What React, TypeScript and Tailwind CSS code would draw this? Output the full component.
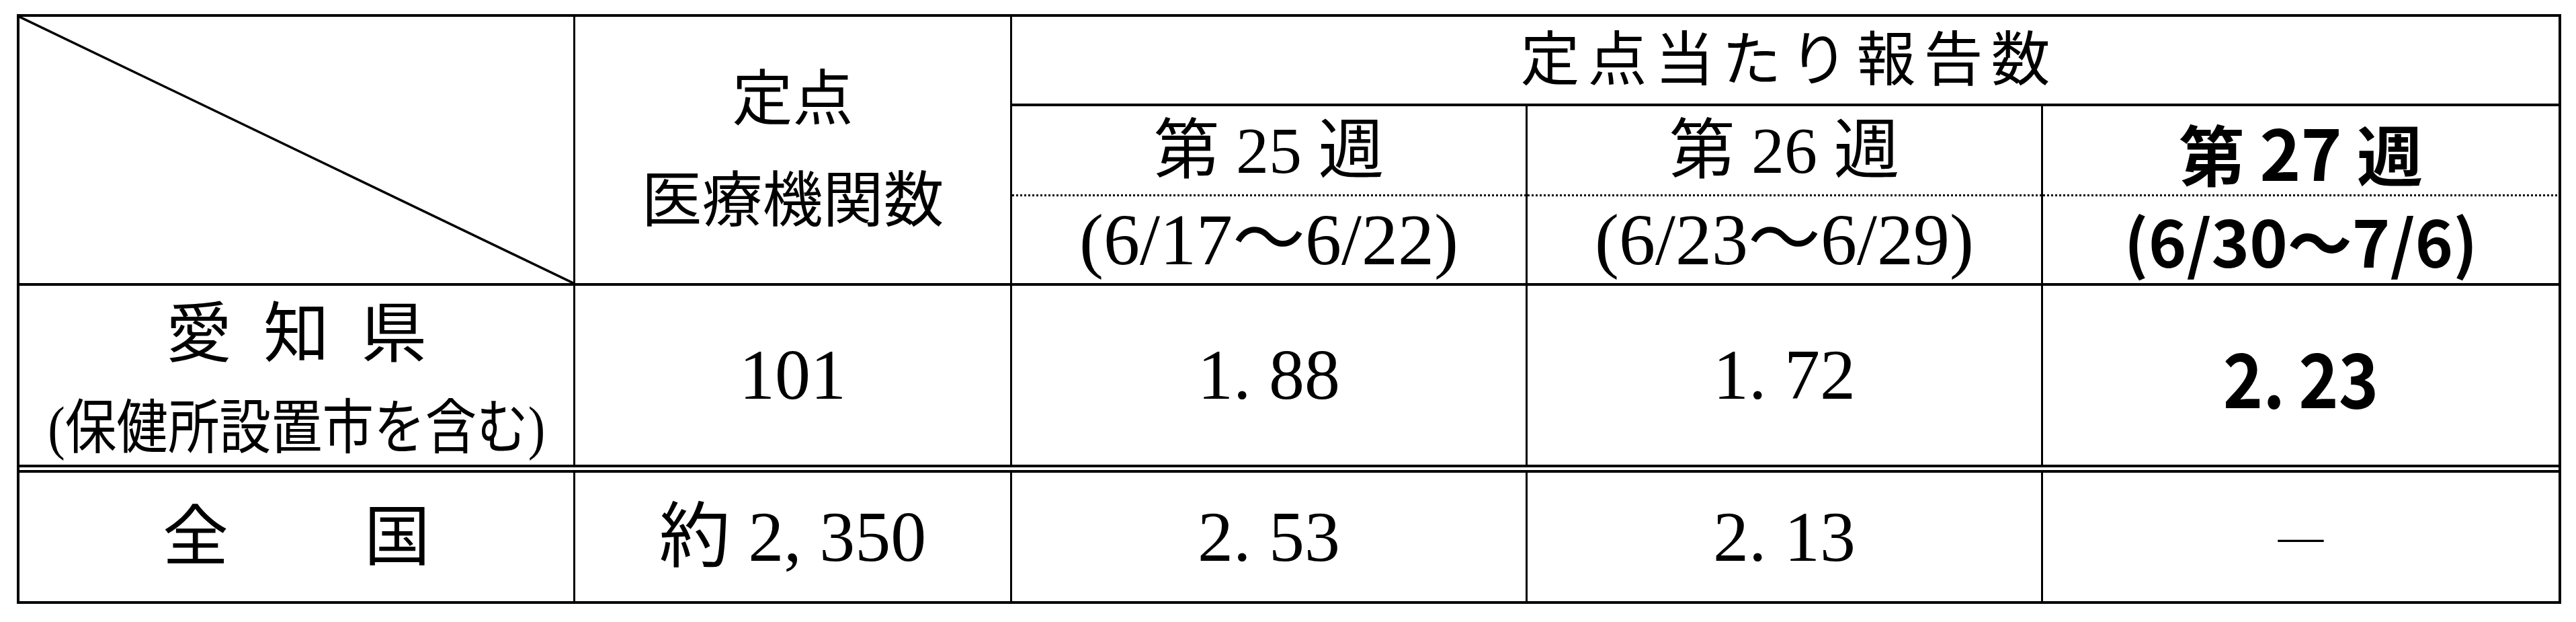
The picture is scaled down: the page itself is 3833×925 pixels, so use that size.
import React from "react";

const serif = "font-['Liberation_Serif','Noto_Sans_CJK_JP',serif]";
const sans = "font-['Noto_Sans_CJK_JP',sans-serif]";

function Num({ v }: { v: string }) {
  const [a, b] = v.split(".");
  return (
    <span className={`${serif} text-[106px] leading-none whitespace-nowrap`}>
      {a}.<span className="ml-[0.25em]">{b}</span>
    </span>
  );
}

function BoldNum({ v }: { v: string }) {
  const [a, b] = v.split(".");
  return (
    <span className={`${sans} inline-block scale-x-[0.9] text-[112px] font-bold leading-none whitespace-nowrap`}>
      {a}.<span className="ml-[0.2em]">{b}</span>
    </span>
  );
}

function Week({
  label,
  range,
  bold,
  last,
}: {
  label: string;
  range: string;
  bold?: boolean;
  last?: boolean;
}) {
  return (
    <div className={`w-[767px] h-full flex flex-col ${last ? "" : "border-r-[3px] border-black"}`}>
      <div className="h-[131px] flex items-center justify-center">
        {bold ? (
          <span className={`${sans} text-[98px] font-bold leading-none whitespace-nowrap`}>
            第 <span className="text-[104px]">{label}</span> 週
          </span>
        ) : (
          <span className={`${serif} text-[98px] leading-none whitespace-nowrap`}>
            第 {label} 週
          </span>
        )}
      </div>
      <div className="h-[3px] bg-[image:repeating-linear-gradient(90deg,#000_0px,#000_3px,transparent_3px,transparent_6px)]" />
      <div className="flex-1 flex items-center justify-center">
        {bold ? (
          <span className={`${sans} text-[96px] font-bold leading-none whitespace-nowrap`}>
            {range}
          </span>
        ) : (
          <span className={`${serif} text-[108px] leading-none whitespace-nowrap`}>
            {range}
          </span>
        )}
      </div>
    </div>
  );
}

export default function App() {
  return (
    <div className="w-[3833px] h-[925px] bg-white pt-[21px] pl-[25px] text-black">
      <div className="w-[3786px] h-[877px] border-4 border-black flex flex-col">
        {/* Header */}
        <div className="h-[400px] border-b-4 border-black flex">
          <div className="w-[827px] h-full border-r-[3px] border-black relative">
            <svg
              className="absolute inset-0 w-full h-full"
              viewBox="0 0 824 396"
              preserveAspectRatio="none"
            >
              <line x1="0" y1="0" x2="824" y2="396" stroke="#000" strokeWidth="3.5" />
            </svg>
          </div>
          <div className="w-[650px] h-full border-r-[3px] border-black flex flex-col items-center justify-center">
            <div className={`${serif} text-[90px] leading-[151px] text-center whitespace-nowrap`}>
              <div>定点</div>
              <div>医療機関数</div>
            </div>
          </div>
          <div className="w-[2301px] h-full flex flex-col">
            <div className="h-[133px] border-b-4 border-black flex items-center justify-center">
              <span className={`${serif} text-[88px] tracking-[12px] pl-[12px] leading-none whitespace-nowrap`}>
                定点当たり報告数
              </span>
            </div>
            <div className="flex-1 flex">
              <Week label="25" range="(6/17〜6/22)" />
              <Week label="26" range="(6/23〜6/29)" />
              <Week label="27" range="(6/30〜7/6)" bold last />
            </div>
          </div>
        </div>

        {/* Row 1: 愛知県 */}
        <div className="h-[278px] border-b-[12px] border-double border-black flex">
          <div className="w-[827px] h-full border-r-[3px] border-black flex flex-col items-center pt-[22px]">
            <div className={`${serif} h-[100px] text-[98px] leading-[100px] flex gap-[47px]`}>
              <span>愛</span>
              <span>知</span>
              <span>県</span>
            </div>
            <div className="h-[100px] mt-[40px] flex items-center justify-center">
              <span className={`${serif} inline-block scale-x-[0.87] text-[88px] leading-[100px] whitespace-nowrap`}>
                (保健所設置市を含む)
              </span>
            </div>
          </div>
          <div className="w-[650px] h-full border-r-[3px] border-black flex items-center justify-center">
            <span className={`${serif} text-[106px] leading-none`}>101</span>
          </div>
          <div className="w-[767px] h-full border-r-[3px] border-black flex items-center justify-center">
            <Num v="1.88" />
          </div>
          <div className="w-[767px] h-full border-r-[3px] border-black flex items-center justify-center">
            <Num v="1.72" />
          </div>
          <div className="w-[767px] h-full flex items-center justify-center">
            <BoldNum v="2.23" />
          </div>
        </div>

        {/* Row 2: 全国 */}
        <div className="flex-1 flex">
          <div className="w-[827px] h-full border-r-[3px] border-black flex items-center justify-center">
            <div className={`${serif} text-[98px] leading-none flex gap-[202px]`}>
              <span>全</span>
              <span>国</span>
            </div>
          </div>
          <div className="w-[650px] h-full border-r-[3px] border-black flex items-center justify-center">
            <span className={`${serif} text-[106px] leading-none whitespace-nowrap`}>
              約 2,<span className="ml-[0.25em]">350</span>
            </span>
          </div>
          <div className="w-[767px] h-full border-r-[3px] border-black flex items-center justify-center">
            <Num v="2.53" />
          </div>
          <div className="w-[767px] h-full border-r-[3px] border-black flex items-center justify-center">
            <Num v="2.13" />
          </div>
          <div className="w-[767px] h-full flex items-center justify-center">
            <span className={`${sans} text-[80px] leading-none`}>―</span>
          </div>
        </div>
      </div>
    </div>
  );
}
